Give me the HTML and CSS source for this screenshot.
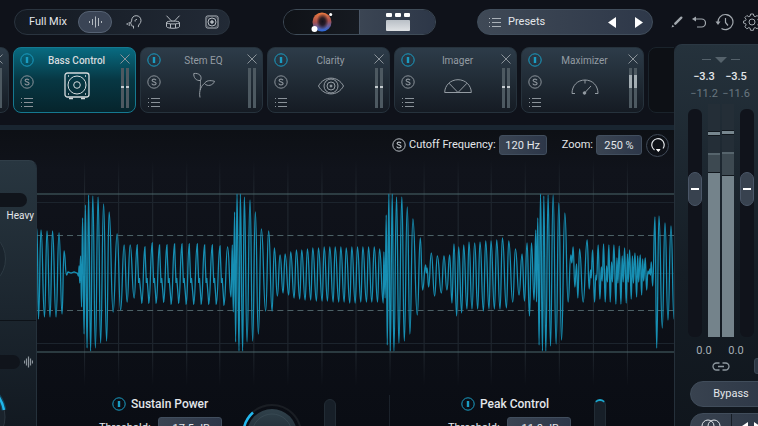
FILE: index.html
```
<!DOCTYPE html>
<html lang="en">
<head>
	<meta charset="UTF-8">
	<title>Bass Control</title>
	<link rel="stylesheet" href="styles.css">
</head>
<body>
	<svg class="defs" aria-hidden="true">
		<symbol id="power" viewBox="0 0 14 14"><circle cx="7" cy="7" r="6.2"/><path d="M7 4v6" stroke-width="2.4"/></symbol>
		<symbol id="solo" viewBox="0 0 14 14"><circle cx="7" cy="7" r="6.2"/><path d="M9 5.3C8.700 4.400 7.900 4.200 7 4.200C5.900 4.200 5.100 4.700 5.100 5.500C5.100 7.200 9.100 6.500 9.100 8.400C9.100 9.300 8.200 9.900 7 9.900C5.900 9.900 5 9.400 4.900 8.500" stroke-width="1.200"/></symbol>
		<symbol id="list" viewBox="0 0 12 10"><path d="M3 1.500h9M3 5.500h9M3 9.500h9"/><path d="M0 1.500h1M0 5.500h1M0 9.500h1"/></symbol>
		<symbol id="close" viewBox="0 0 10 10"><path d="M.5 .5l9 9M9.500 .5l-9 9"/></symbol>
	</svg>

	<div class="app">
		<header class="topbar">
			<div class="sources">
				<span class="sources-name">Full Mix</span>
				<button class="source active" aria-label="Mix">
					<svg width="13" height="12" viewBox="0 0 13 12"><path d="M.5 5v2M3.500 3v6M6.500 .5v11M9.500 2v8M12.500 5v2"/></svg>
				</button>
				<button class="source" aria-label="Vocals">
					<svg width="16" height="14" viewBox="0 0 16 14"><path d="M7.500 13.500v-2.500H6.200c-1 0-1-.8-.9-2.200L4.400 8.300l1.200-2.400C5.500 2.800 7.400.7 10.200.7c3 0 4.800 2.200 4.800 4.900 0 3-2.600 3.800-2.600 5.500v1M11 4.500c-1.400-.3-2.300.8-1.800 2M3.200 7v4M1.200 8v2"/></svg>
				</button>
				<button class="source" aria-label="Drums">
					<svg width="16" height="14" viewBox="0 0 16 14"><ellipse cx="8" cy="7.500" rx="6.500" ry="1.500"/><path d="M1.500 7.500v4.200c1 2.100 12 2.100 13 0V7.500M5.500 9v4M10.500 9v4M1.500 .7l5.500 5.800M14.500 .7L9 6.500"/></svg>
				</button>
				<button class="source" aria-label="Bass">
					<svg width="14" height="14" viewBox="0 0 14 14"><rect x="1" y="1" width="12" height="12" rx="1.500"/><circle cx="7" cy="7" r="4"/><circle cx="7" cy="7" r="1.300" fill="currentColor"/><path d="M2.500 2.800h.8M10.700 2.800h.8M2.500 11.200h.8M10.700 11.200h.8"/></svg>
				</button>
			</div>

			<div class="views">
				<button class="view" aria-label="Assistant">
					<svg width="22" height="20" viewBox="0 0 22 20">
						<defs>
							<linearGradient id="orb" x1=".4" y1="0" x2=".5" y2="1"><stop offset="0" stop-color="#ee7a3d"/><stop offset=".48" stop-color="#a6504f"/><stop offset="1" stop-color="#286be0"/></linearGradient>
							<radialGradient id="core"><stop offset="0" stop-color="#15131d"/><stop offset=".45" stop-color="#15131d" stop-opacity=".85"/><stop offset="1" stop-color="#15131d" stop-opacity="0"/></radialGradient>
						</defs>
						<circle cx="11" cy="10" r="9.500" fill="url(#orb)" stroke="none"/>
						<ellipse cx="11.500" cy="9.500" rx="6" ry="8" fill="url(#core)" stroke="none"/>
						<circle cx="3.500" cy="17" r="3" fill="#fff" stroke="none"/>
						<circle cx="19.700" cy="2.400" r="1.500" fill="#fff" stroke="none"/>
					</svg>
				</button>
				<button class="view active" aria-label="Modules">
					<svg width="24" height="18" viewBox="0 0 24 18">
						<defs><linearGradient id="slab" x2="0" y2="1"><stop stop-color="#b9bfc6"/><stop offset="1" stop-color="#dfe2e5"/></linearGradient></defs>
						<g fill="#fff" stroke="none"><rect width="6" height="4" rx="1"/><rect x="9" width="6" height="4" rx="1"/><rect x="18" width="6" height="4" rx="1"/><rect y="7" width="24" height="11" rx="1" fill="url(#slab)"/></g>
					</svg>
				</button>
			</div>

			<div class="presets">
				<svg width="12" height="10"><use href="#list"/></svg>
				<span class="presets-name">Presets</span>
				<button class="arrow" aria-label="Previous preset"><svg width="8" height="11" viewBox="0 0 8 11"><path d="M8 0v11L0 5.500z" fill="#fff" stroke="none"/></svg></button>
				<button class="arrow" aria-label="Next preset"><svg width="8" height="11" viewBox="0 0 8 11"><path d="M0 0v11l8-5.500z" fill="#fff" stroke="none"/></svg></button>
			</div>

			<div class="tools">
				<button aria-label="Edit"><svg width="12" height="12" viewBox="0 0 12 12"><path d="M4.300 7.700l6-6" stroke-width="2.400" stroke-linecap="round"/><path d="M.5 11.500l1-2.800 1.800 1.700z" fill="currentColor" stroke="none"/></svg></button>
				<button aria-label="Undo"><svg width="14" height="12" viewBox="0 0 14 12"><path d="M3 3h6.500a4 4 0 0 1 0 8H5" stroke-width="1.200"/><path d="M0 3l4-2.500v5z" fill="currentColor" stroke="none"/></svg></button>
				<button aria-label="History"><svg width="19" height="18" viewBox="0 0 19 18"><path d="M3 10A7.500 7.500 0 1 1 6.500 15.400M10.500 5v4.500l2.500 3" stroke-width="1.200"/><path d="M.5 8.500h5l-2.500 3.500z" fill="currentColor" stroke="none"/></svg></button>
				<button aria-label="Settings"><svg width="18" height="18" viewBox="0 0 18 18"><path d="M7.600 1h2.800l.5 2.100 1.300.6L14.100 2.500l2 2-1.200 1.900.5 1.200 2.100.5v2l-2.100.5-.5 1.300 1.200 1.900-2 2-1.900-1.200-1.300.6-.5 2.100H7.600l-.5-2.100-1.300-.6-1.900 1.200-2-2 1.200-1.900-.5-1.300L.5 10.100v-2l2.100-.5.500-1.200L1.900 4.500l2-2 1.900 1.200 1.300-.6z"/><circle cx="9" cy="9" r="3"/></svg></button>
			</div>
		</header>

		<nav class="strip">
			<section class="module">
				<div class="module-side"></div>
				<div class="module-main"></div>
				<div class="module-end">
					<button aria-label="Remove"><svg width="10" height="10"><use href="#close"/></svg></button>
					<div class="bars"><i></i><i></i></div>
				</div>
			</section>
			<section class="module selected">
				<div class="module-side">
					<button class="power" aria-label="Power"><svg width="14" height="14"><use href="#power"/></svg></button>
					<button aria-label="Solo"><svg width="14" height="14"><use href="#solo"/></svg></button>
					<button aria-label="Module presets"><svg width="12" height="10"><use href="#list"/></svg></button>
				</div>
				<div class="module-main">
					<h2>Bass Control</h2>
					<svg width="26" height="28" viewBox="0 0 26 28"><rect x="1" y="1" width="24" height="24" rx="2.500" stroke-width="1.300"/><circle cx="13" cy="13" r="9"/><circle cx="13" cy="13" r="3.300"/><path d="M4 4h1M21 4h1M4 22h1M21 22h1M5 26.500h4M17 26.500h4" stroke-width="1.300"/></svg>
				</div>
				<div class="module-end">
					<button aria-label="Remove"><svg width="10" height="10"><use href="#close"/></svg></button>
					<div class="bars dot"><i></i><i></i></div>
				</div>
			</section>
			<section class="module">
				<div class="module-side">
					<button class="power" aria-label="Power"><svg width="14" height="14"><use href="#power"/></svg></button>
					<button aria-label="Solo"><svg width="14" height="14"><use href="#solo"/></svg></button>
					<button aria-label="Module presets"><svg width="12" height="10"><use href="#list"/></svg></button>
				</div>
				<div class="module-main">
					<h2>Stem EQ</h2>
					<svg width="22" height="26" viewBox="0 0 22 26"><path d="M7 25.500C5.500 18 9 13 11.500 11.500M11.500 11.500C13 8.500 17 8 21.500 9.300C20 13.500 14.500 15 11.500 11.500zM7.200 18C7.500 12 7.500 10 7.500 8.500M7.500 8.500C3 9 .5 5.500.8 1.500C6 .8 9.500 4 7.500 8.500z"/></svg>
				</div>
				<div class="module-end">
					<button aria-label="Remove"><svg width="10" height="10"><use href="#close"/></svg></button>
					<div class="bars"><i></i><i></i></div>
				</div>
			</section>
			<section class="module">
				<div class="module-side">
					<button class="power" aria-label="Power"><svg width="14" height="14"><use href="#power"/></svg></button>
					<button aria-label="Solo"><svg width="14" height="14"><use href="#solo"/></svg></button>
					<button aria-label="Module presets"><svg width="12" height="10"><use href="#list"/></svg></button>
				</div>
				<div class="module-main">
					<h2>Clarity</h2>
					<svg width="26" height="18" viewBox="0 0 26 18"><path d="M.5 9C6-1.500 20-1.500 25.500 9C20 19.500 6 19.500.5 9z"/><circle cx="13" cy="9" r="7"/><circle cx="13" cy="9" r="4"/><circle cx="13" cy="9" r="1" fill="currentColor"/></svg>
				</div>
				<div class="module-end">
					<button aria-label="Remove"><svg width="10" height="10"><use href="#close"/></svg></button>
					<div class="bars dot"><i></i><i></i></div>
				</div>
			</section>
			<section class="module">
				<div class="module-side">
					<button class="power" aria-label="Power"><svg width="14" height="14"><use href="#power"/></svg></button>
					<button aria-label="Solo"><svg width="14" height="14"><use href="#solo"/></svg></button>
					<button aria-label="Module presets"><svg width="12" height="10"><use href="#list"/></svg></button>
				</div>
				<div class="module-main">
					<h2>Imager</h2>
					<svg width="28" height="14" viewBox="0 0 28 14"><path d="M.7 13.500C.7 6.500 6.500 .7 14 .7S27.300 6.500 27.300 13.500zM14 13.500L5 4.200M14 13.500l9-9.300"/></svg>
				</div>
				<div class="module-end">
					<button aria-label="Remove"><svg width="10" height="10"><use href="#close"/></svg></button>
					<div class="bars dot"><i></i><i></i></div>
				</div>
			</section>
			<section class="module">
				<div class="module-side">
					<button class="power" aria-label="Power"><svg width="14" height="14"><use href="#power"/></svg></button>
					<button aria-label="Solo"><svg width="14" height="14"><use href="#solo"/></svg></button>
					<button aria-label="Module presets"><svg width="12" height="10"><use href="#list"/></svg></button>
				</div>
				<div class="module-main">
					<h2>Maximizer</h2>
					<svg width="28" height="16" viewBox="0 0 28 16"><path d="M4 14.500H1C1 6.500 6.500 1 14 1s13 5.500 13 13.500h-3M14 1v3.500M14 13.500l6-6.500"/><circle cx="13.500" cy="14" r="1.300" fill="currentColor"/></svg>
				</div>
				<div class="module-end">
					<button aria-label="Remove"><svg width="10" height="10"><use href="#close"/></svg></button>
					<div class="bars loud"><i></i><i></i></div>
				</div>
			</section>
			<section class="module empty"></section>
		</nav>

		<main class="editor">
			<aside class="macro">
				<div class="macro-top">
					<input class="track" type="range" id="weight">
					<label for="weight">Heavy</label>
					<div class="dial"></div>
				</div>
				<div class="macro-bottom">
					<div class="macro-row">
						<input class="track" type="range" aria-label="Amount">
						<svg width="9" height="12" viewBox="0 0 9 12"><path d="M.5 4.500v3M2.500 2.500v7M4.500 .5v11M6.500 2.500v7M8.500 4.500v3" stroke-width="1.200"/></svg>
					</div>
					<svg class="arc" width="10" height="50" viewBox="0 0 10 50">
						<circle cx="-26" cy="26" r="31" fill="#1a232c" stroke="#2b363f"/>
						<path d="M-6 0Q2 8 4 19" stroke="#127ba4" stroke-opacity=".4" stroke-width="5"/>
						<path d="M-6 0Q2 8 4 19" stroke="#1fb6ea" stroke-width="2.500"/>
					</svg>
				</div>
			</aside>

			<div class="work">
				<div class="options">
					<button class="solo" aria-label="Solo cutoff"><svg width="14" height="14"><use href="#solo"/></svg></button>
					<label for="cutoff">Cutoff Frequency:</label>
					<input class="value" id="cutoff" value="120 Hz">
					<label class="zoom-label" for="zoom">Zoom:</label>
					<input class="value" id="zoom" value="250 %">
					<button class="reset" aria-label="Reset zoom"><svg width="14" height="14" viewBox="0 0 14 14"><path d="M3.500 12A6.200 6.200 0 1 1 12 10.500" stroke-width="1.200"/><path d="M5.500 11.500h3.500l-1.700 2z" fill="#fff" stroke="#fff"/></svg></button>
				</div>

				<svg class="plot" viewBox="37 160 636 226" preserveAspectRatio="none">
					<defs>
						<linearGradient id="fade" gradientUnits="userSpaceOnUse" x1="0" y1="160" x2="0" y2="386"><stop stop-color="#212830" stop-opacity="0"/><stop offset=".15" stop-color="#212830"/><stop offset=".85" stop-color="#212830"/><stop offset="1" stop-color="#212830" stop-opacity="0"/></linearGradient>
					</defs>
					<g id="grid"></g>
					<path class="faint" d="M37 202.500H673M37 273.500H673M37 343.500H673"/>
					<path class="dashed" d="M37 235.500H673M37 310.500H673"/>
					<path class="edge" d="M37 194H673M37 352H673"/>
					<path id="wave"/>
				</svg>

				<div class="controls">
					<section class="control">
						<div class="control-text">
							<h3><svg class="power" width="14" height="14"><use href="#power"/></svg>Sustain Power</h3>
							<div class="field"><label for="sustain">Threshold:</label><input class="value wide" id="sustain" value="-17.5 dB"></div>
						</div>
						<svg class="knob" width="64" height="64" viewBox="0 0 64 64">
							<defs><linearGradient id="cap" x2="0" y2="1"><stop stop-color="#30414b"/><stop offset="1" stop-color="#131b24"/></linearGradient></defs>
							<circle cx="32" cy="32" r="29" stroke="#1a1e24" stroke-width="2"/>
							<circle cx="32" cy="32" r="25" fill="url(#cap)" stroke="none"/>
							<circle cx="32" cy="32" r="20" stroke="#41545e" stroke-opacity=".5"/>
							<path d="M4 36A28.500 28.500 0 0 1 13 10.500" stroke="#23b8ee" stroke-width="2.500"/>
						</svg>
						<div class="gain"></div>
					</section>
					<section class="control">
						<div class="control-text">
							<h3><svg class="power" width="14" height="14"><use href="#power"/></svg>Peak Control</h3>
							<div class="field"><label for="peak">Threshold:</label><input class="value wide" id="peak" value="-11.0 dB"></div>
						</div>
						<div class="gain capped"></div>
					</section>
				</div>
			</div>
		</main>

		<aside class="output">
			<svg class="marker" width="40" height="6" viewBox="0 0 40 6"><path d="M1 2.500h9M30 2.500h9"/><path d="M14 0h12l-6 6z" fill="currentColor" stroke="none"/></svg>
			<div class="levels peak"><span>−3.3</span><span>−3.5</span></div>
			<div class="levels rms"><span>−11.2</span><span>−11.6</span></div>
			<div class="faders">
				<input class="fader" type="range" min="0" max="194" value="131" aria-label="Left gain">
				<div class="meter"><i class="hold"></i><i class="soft"></i><i class="full"></i></div>
				<div class="meter right"><i class="hold"></i><i class="soft"></i><i class="full"></i></div>
				<input class="fader" type="range" min="0" max="194" value="131" aria-label="Right gain">
			</div>
			<div class="levels offset"><span>0.0</span><span>0.0</span></div>
			<div class="link-row">
				<button class="link" aria-label="Link gain"><svg width="18" height="9" viewBox="0 0 18 9"><path d="M7.500 1H4.500a3.500 3.500 0 0 0 0 7h3M10.500 1h3a3.500 3.500 0 0 1 0 7h-3M6 4.500h6" stroke-width="1.300"/></svg></button>
				<button class="mini" aria-label="More"></button>
			</div>
			<button class="bypass">Bypass</button>
			<div class="modes">
				<button aria-label="Mono"><svg width="20" height="14" viewBox="0 0 20 14"><circle cx="7" cy="7" r="6"/><circle cx="13" cy="7" r="6"/></svg></button>
				<button aria-label="Swap channels"><svg width="18" height="10" viewBox="0 0 18 10"><path d="M0 5l6-4v8zM18 5l-6-4v8z" fill="#fff" stroke="none"/></svg></button>
			</div>
		</aside>
	</div>
	<script src="script.js"></script>
</body>
</html>
```
FILE: styles.css
```
*{
	box-sizing: border-box;
}
body{
	margin: 0;
	background: #0f121a;
	color: #e3e6ea;
	font: 11px/14px Roboto, "Liberation Sans", sans-serif;
	overflow: hidden;
}
h2, h3{
	margin: 0;
	font-size: inherit;
	font-weight: 500;
}
button, input{
	margin: 0;
	padding: 0;
	border: 0;
	background: none;
	color: inherit;
	font: inherit;
}
button{
	display: flex;
	align-items: center;
	justify-content: center;
}
svg{
	display: block;
	flex: none;
	fill: none;
	stroke: currentColor;
	stroke-width: 1;
}
.defs{
	position: absolute;
	width: 0;
	height: 0;
}
.app{
	display: grid;
	grid-template-columns: minmax(0, 1fr) 84px;
	grid-template-rows: 44px 86px minmax(0, 1fr);
	height: 100vh;
}

/* top bar */
.topbar{
	grid-column: 1 / 3;
	display: flex;
	align-items: center;
	padding-left: 14px;
	min-width: 0;
	overflow: hidden;
}
.sources, .views, .presets{
	display: flex;
	align-items: center;
	flex: none;
	height: 26px;
	border: 1px solid #2a343f;
	border-radius: 13px;
}
.sources{
	width: 216px;
	padding-left: 14px;
	background: linear-gradient(90deg, #141a22, #222a36);
}
.sources-name{
	flex: none;
	width: 49px;
}
.source{
	flex: none;
	width: 34px;
	height: 22px;
	margin-right: 5px;
	border-radius: 11px;
	color: #b4bac0;
}
.source:last-child{
	margin-right: 0;
}
.source.active{
	border: 1px solid #566273;
	background: #3a4455;
}
.views{
	width: 153px;
	margin-left: 53px;
	border-color: #3f4c58;
	overflow: hidden;
}
.view{
	flex: 1;
	height: 24px;
	background: linear-gradient(90deg, #0f1217, #161a21);
}
.view.active{
	border-left: 1px solid #4a5666;
	background: linear-gradient(90deg, #3b4553, #2d3748);
}
.presets{
	width: 176px;
	margin-left: 41px;
	padding: 0 3px 0 11px;
	gap: 7px;
	border-color: #414e5c;
	background: linear-gradient(90deg, #3f4956, #2e3849);
}
.presets > svg{
	color: #aab1b8;
}
.presets-name{
	flex: 1;
}
.arrow{
	width: 20px;
	height: 20px;
}
.tools{
	display: flex;
	align-items: center;
	gap: 9px;
	margin-left: 18px;
	color: #a2a8ae;
}

/* module strip */
.strip{
	display: flex;
	gap: 4px;
	padding-top: 3px;
	overflow: hidden;
	border-bottom: 5px solid #192530;
}
.module{
	display: grid;
	grid-template-columns: 25px 1fr 21px;
	flex: none;
	width: 123px;
	height: 66px;
	border: 1px solid #26323c;
	border-radius: 8px;
	background: linear-gradient(#2d3c49, #151b23);
	color: #949ca3;
}
.module:first-child{
	margin-left: -114px;
}
.module.selected{
	border-color: #157990;
	background: linear-gradient(#086b81, #073743 50%, #06242c);
	color: #d5dadd;
}
.module.empty{
	border-color: #1a232b;
	background: #0d1015;
}
.module-side, .module-end{
	display: flex;
	flex-direction: column;
	align-items: center;
	color: #8a9299;
}
.module-side{
	gap: 8px;
	padding-top: 5px;
}
.module-side .power, .power{
	color: #1a9cc2;
}
.module-main{
	display: flex;
	flex-direction: column;
	align-items: center;
	padding-top: 6px;
}
.module-main h2{
	font-size: 10px;
	font-weight: 400;
	white-space: nowrap;
}
.module.selected h2{
	font-weight: 500;
}
.module-main svg{
	margin: 4px auto auto;
}
.module-main svg[height="18"]{
	margin-top: 9px;
}
.module-main svg[height="14"], .module-main svg[height="16"]{
	margin-top: 11px;
}
.module-end{
	gap: 4px;
	padding-top: 6px;
}
.bars{
	display: flex;
	gap: 2px;
}
.bars i{
	width: 3px;
	height: 40px;
	background: #4d5961;
}
.bars.dot i{
	background: linear-gradient(#4d5961 18px, #c5cbcf 18px, #c5cbcf 20px, #4d5961 20px);
}
.bars.loud i{
	background: linear-gradient(#4d5961 7px, #a3adb3 7px, #a3adb3 20px, #4d5961 20px);
}

/* editor */
.editor{
	display: flex;
	overflow: hidden;
	background: linear-gradient(#0d1015, #10131b 40px, #0a0d14);
}
.macro{
	flex: none;
	display: flex;
	flex-direction: column;
	width: 37px;
	margin-top: 30px;
	border-top: 1px solid #303e48;
	border-right: 1px solid #25313b;
	border-radius: 0 8px 0 0;
	background: linear-gradient(#283640, #121921);
	overflow: hidden;
}
.macro-top{
	flex: none;
	height: 160px;
	padding-top: 32px;
	border-bottom: 1px solid #0d1218;
}
.track{
	display: block;
	width: 27px;
	height: 14px;
	border-radius: 0 7px 7px 0;
	background: #10141b;
	appearance: none;
}
.track::-webkit-slider-thumb{
	appearance: none;
	width: 0;
}
.macro label{
	display: block;
	padding: 2px 2px 0 0;
	font-size: 10px;
	text-align: right;
}
.dial{
	width: 60px;
	height: 60px;
	margin: 6px 0 0 -54px;
	border: 1px solid #2d3a43;
	border-radius: 50%;
	background: #1a242d;
}
.arc{
	margin-top: 22px;
}
.macro-bottom{
	padding-top: 34px;
}
.macro-row{
	display: flex;
	align-items: center;
	gap: 4px;
	color: #8b949b;
}
.macro-row .track{
	width: 20px;
}
.work{
	flex: 1;
	display: flex;
	flex-direction: column;
	min-width: 0;
}
.options{
	flex: none;
	display: flex;
	align-items: center;
	justify-content: flex-end;
	height: 30px;
	padding-right: 5px;
	gap: 3px;
}
.solo{
	color: #b4bac0;
}
.value{
	width: 48px;
	height: 20px;
	border: 1px solid #414e5e;
	border-radius: 3px;
	background: linear-gradient(90deg, #3a4452, #2d3749);
	text-align: center;
}
#zoom{
	width: 46px;
}
.zoom-label{
	margin-left: 12px;
}
.reset{
	width: 23px;
	height: 23px;
	margin-left: 1px;
	border: 1px solid #404a58;
	border-radius: 50%;
}
.plot{
	width: 100%;
	height: 226px;
}
.plot .faint{
	stroke: #1c242d;
}
.plot .dashed{
	stroke: #4c6166;
	stroke-dasharray: 6 4;
}
.plot .edge{
	stroke: #4a676b;
}
#wave{
	stroke: #178fb3;
	stroke-width: 1.3;
}
.controls{
	display: flex;
	margin-top: 9px;
	overflow: hidden;
}
.control{
	flex: none;
	display: flex;
	align-items: flex-start;
	width: 352px;
	padding-left: 62px;
}
.control + .control{
	padding-left: 58px;
	border-left: 1px solid #1b222b;
}
.control-text{
	width: 134px;
}
.control h3{
	display: flex;
	align-items: center;
	gap: 5px;
	padding: 2px 0 0 13px;
	font-size: 12px;
	white-space: nowrap;
}
.field{
	display: flex;
	align-items: center;
	gap: 7px;
	margin-top: 6px;
}
.value.wide{
	width: 64px;
	height: 22px;
}
.knob{
	margin: 7px 20px 0 7px;
}
.gain{
	width: 12px;
	height: 60px;
	margin-top: 4px;
	border: 1px solid #222c35;
	border-radius: 6px;
	background: #171f28;
}
.capped{
	margin-left: 12px;
	border-top: 2px solid #1ba7cf;
}

/* output column */
.output{
	grid-area: 2 / 2 / 4 / 3;
	display: flex;
	flex-direction: column;
	padding: 12px 0 0 13px;
	overflow: hidden;
	border-top: 1px solid #2b3843;
	border-left: 1px solid #25303a;
	border-radius: 8px 0 0 0;
	background: linear-gradient(#25323c, #151d25 60%, #10161d);
}
.output > *{
	flex: none;
}
.marker{
	margin-left: 13px;
	color: #55626b;
}
.levels{
	display: flex;
	width: 64px;
	height: 17px;
	font-weight: 500;
}
.levels span{
	flex: 1;
	text-align: center;
}
.peak{
	margin-top: 7px;
}
.rms{
	color: #697780;
	font-weight: 400;
}
.offset{
	color: #a6afb5;
	font-weight: 400;
	margin-top: 7px;
}
.faders{
	display: flex;
	width: 66px;
	height: 233px;
	gap: 2px;
}
.fader{
	flex: none;
	width: 14px;
	height: 228px;
	margin: 5px 4px 0 0;
	border-radius: 6px;
	background: #10131b;
	appearance: none;
	writing-mode: vertical-lr;
	direction: rtl;
}
.fader:last-child{
	margin: 5px 0 0 4px;
}
.fader::-webkit-slider-thumb{
	appearance: none;
	width: 14px;
	height: 34px;
	border: 1px solid #4a5667;
	border-radius: 7px;
	background: linear-gradient(#fff, #fff) center / 8px 2px no-repeat, #38424f;
}
.meter{
	flex: 1;
	display: flex;
	flex-direction: column;
	padding-top: 27px;
	background: #242e37;
}
.hold{
	height: 5px;
	border-top: 1px solid #11171d;
	border-bottom: 1px solid #11171d;
	background: #77868e;
}
.soft{
	height: 19px;
	margin-top: 17px;
	border-top: 2px solid #56646c;
	background: #3d4951;
}
.full{
	flex: 1;
	border-top: 1px solid #11171d;
	background: #74838b;
}
.right{
	padding-top: 26px;
}
.right .soft{
	height: 23px;
}
.link-row{
	display: flex;
	align-items: center;
	gap: 24px;
	height: 16px;
	margin-top: -3px;
	padding-left: 24px;
	color: #8e989f;
}
.mini{
	flex: none;
	width: 18px;
	height: 16px;
	border: 1px solid #3a4653;
	border-radius: 3px;
	background: #2d3744;
}
.bypass, .modes{
	width: 82px;
	height: 26px;
	margin: 7px 0 0 2px;
	border: 1px solid #414d5b;
	border-radius: 13px;
	background: linear-gradient(90deg, #38424f, #2e3847);
}
.modes{
	display: flex;
	margin-top: 6px;
}
.modes button{
	flex: 1;
}
.modes button + button{
	border-left: 1px solid #161d25;
}
```
FILE: script.js
```
// turning points of the signal, x and y in plot units
var points = [
	37,229, 38.5,319, 41,230, 44.5,317, 47,231, 50,317, 52.5,231, 56,317, 59,233, 62,314, 64,251, 66.5,275,
	68,272, 71,273, 74,272, 77,273, 78.5,276, 79,266, 79.7,283, 80.5,256, 81.5,307, 82.5,218, 84,334, 85.3,205, 87,348,
	88.5,195, 90.5,351, 92.7,196, 95.3,348, 98,197, 100.5,343, 103.5,204, 106.5,341, 109,212, 113,312,
	117,234, 120.5,310, 124,245, 127,302, 130,245, 134,298, 137,245, 141.7,303,
	144.7,247, 148.7,303, 152,243, 156,303, 159.3,245, 163.5,302, 166.7,245, 171,304, 174.3,244, 178.5,303,
	181.7,244, 186,304, 189,244, 193.5,304, 197,244, 201,304, 204.3,245, 208.5,304, 212,245, 216,304,
	219.7,246, 223.7,305, 227.3,247, 230.7,297, 232,245, 233,312, 234.3,212, 235.3,342, 236.7,194, 238.7,351,
	240,194, 242.3,351, 244,197, 246.7,342, 249.7,200, 252.3,341, 255,212, 258,334, 261,229, 265.3,311,
	268.3,231, 271.7,311, 274,248, 277,296, 279.7,255, 282.7,293, 284.7,254, 288.3,295, 290.3,252, 293.7,298,
	296,250, 299.3,299, 301.3,250, 304.7,300, 307,249, 310.3,300, 312.3,248, 316,301, 318,248, 321.7,301,
	323.7,247, 327,301, 329.3,247, 332.7,302, 334.7,247, 338.3,302, 340.3,247, 343.7,302, 345.7,248, 349.3,303,
	351.3,247, 354.7,303, 357,247, 360.3,302, 362.3,247, 366,302, 368,247, 371.3,302, 373.7,247, 377,302,
	379,249, 382.7,303, 383.3,252, 384.6,298, 385.7,215, 386.7,345, 388.3,194, 389.7,351, 391.7,194, 393.3,351,
	396,197, 398.3,343, 401.3,197, 403.7,341, 406.7,207, 409.3,334, 412.3,219, 416.7,315, 419.7,238, 422,290,
	425,265, 425.7,273, 426.5,268, 428,287, 430.7,253, 434,296, 436.7,256, 440.7,293, 443.3,256, 446.3,290,
	449,255, 451.3,303, 453.3,244, 456,316, 458,247, 461,313, 463,245, 466.3,309, 468.3,242, 471.3,309,
	474,243, 477,309, 479.3,242, 482.7,311, 485,241, 488.3,309, 490.3,241, 493.7,309, 496,240, 499.3,309,
	501.7,238, 505.7,308, 508,241, 512,302, 514.7,249, 518.3,295, 521.3,254, 523.7,301, 526.3,243, 528.7,316,
	530.7,243, 533.3,300, 535,230, 535.7,302, 537,218, 538.3,345, 539.7,194, 541.7,351, 543,196, 545,351,
	547.3,195, 549.7,346, 552.3,195, 555.3,344, 558,203, 560.7,340, 564,213, 567.3,302, 570,255, 571,263,
	572.3,247, 574,287, 575.7,264, 577,298, 578.7,249, 582.3,302, 586.3,240, 588.3,289, 589.7,270, 590.3,278,
	591.7,250, 593.7,302, 595,275, 595.7,280, 597.3,245, 599,299, 600.5,267, 601.3,281, 602.7,244, 604.3,302,
	605.7,266, 606.5,282, 608,245, 609.3,302, 610.7,262, 611.5,282, 613,245, 615,304, 616,258, 617,283,
	618.3,246, 620,304, 621.3,256, 622.3,282, 623.7,248, 625.3,303, 626.5,254, 627.3,282, 628.7,250,
	630.3,299, 631.5,256, 632.5,283, 634,253, 635.7,297, 636.7,256, 637.7,282, 639.3,255, 640.7,295,
	641.7,259, 642.7,281, 644.3,258, 645.7,290, 647,271, 648,274, 649,269, 649.5,275, 650.3,262, 651.7,286,
	654,217, 655.7,348, 658,216, 661.3,328, 664,223, 667,320, 670,226, 673,319
];

function drawWave(){
	var d = 'M' + points[0] + ' ' + points[1];
	for(var i = 2; i < points.length; i += 2){
		var x0 = points[i-2], y0 = points[i-1];
		var x = points[i], y = points[i+1];
		var mid = (x0 + x) / 2;
		// the long falls of the quiet part have a small step half way down
		if(x > 140 && x < 224 && y > y0){
			d += 'L' + (x0 + 1.5) + ' 283L' + (x0 + 2.2) + ' 278L' + x + ' ' + y;
			continue;
		}
		d += 'C' + mid + ' ' + y0 + ' ' + mid + ' ' + y + ' ' + x + ' ' + y;
	}
	document.getElementById('wave').setAttribute('d', d);
}

function drawGrid(){
	var grid = document.getElementById('grid');
	for(var i = 0; i < 17; i++){
		var line = document.createElementNS('http://www.w3.org/2000/svg', 'rect');
		line.setAttribute('x', Math.round(84 + i * 33.87));
		line.setAttribute('y', 160);
		line.setAttribute('width', 1);
		line.setAttribute('height', 226);
		line.setAttribute('fill', 'url(#fade)');
		line.setAttribute('stroke', 'none');
		grid.appendChild(line);
	}
}

drawGrid();
drawWave();
```
